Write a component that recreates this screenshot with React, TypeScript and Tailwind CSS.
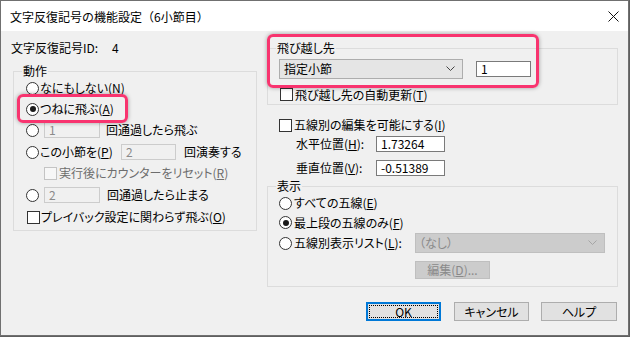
import React from "react";

const FONT = "font-['Noto_Sans_CJK_JP',sans-serif] [font-feature-settings:'palt']";

function Radio({ checked = false }: { checked?: boolean }) {
  return (
    <span className="w-[13px] h-[13px] shrink-0 rounded-full border border-[#333] bg-white flex items-center justify-center">
      {checked && <span className="w-[6px] h-[6px] rounded-full bg-[#1a1a1a]" />}
    </span>
  );
}

function Check({ disabled = false }: { disabled?: boolean }) {
  return (
    <span
      className={
        disabled
          ? "w-[13px] h-[13px] shrink-0 border border-[#c4c4c4] bg-[#f7f7f7]"
          : "w-[13px] h-[13px] shrink-0 border border-[#333] bg-white"
      }
    />
  );
}

function Box({ value, disabled = false, className = "" }: { value: string; disabled?: boolean; className?: string }) {
  return (
    <span
      className={
        (disabled
          ? "border-[#cccccc] bg-[#f0f0f0] text-[#8a8a8a] "
          : "border-[#7a7a7a] bg-white text-black ") +
        "h-[16px] border flex items-center pl-[4px] text-[12px] leading-none shrink-0 " +
        className
      }
    >
      {value}
    </span>
  );
}

function Chevron({ color }: { color: string }) {
  return (
    <svg width="9" height="6" viewBox="0 0 9 6" className="shrink-0">
      <polyline points="0.5,0.5 4.5,4.5 8.5,0.5" fill="none" stroke={color} strokeWidth="1" />
    </svg>
  );
}

function Legend({ children }: { children: React.ReactNode }) {
  return <legend className="ml-[8px] px-[1px] h-[16px] leading-[16px]">{children}</legend>;
}

export default function App() {
  return (
    <div className={`w-[630px] h-[337px] bg-[#5f5f5f] text-[12px] text-black ${FONT}`}>
      <div className="relative w-[629px] h-[336px] border border-[#707070] bg-[#f0f0f0] flex flex-col">
        {/* title bar */}
        <div className="h-[30px] bg-white flex items-center justify-between pl-[9px] pr-[9px] shrink-0">
          <span className="text-[12px] leading-none mt-[1px] [font-feature-settings:normal]">
            文字反復記号の機能設定（6小節目）
          </span>
          <svg width="11" height="11" viewBox="0 0 11 11">
            <path d="M0.5 0.5 L10.5 10.5 M10.5 0.5 L0.5 10.5" stroke="#111" strokeWidth="1" />
          </svg>
        </div>

        <div className="flex flex-1">
          {/* left column */}
          <div className="ml-[10px] flex flex-col">
            <div className="mt-[9px] h-[16px] leading-[16px] flex">
              <span>文字反復記号ID:</span>
              <span className="ml-[14px]">4</span>
            </div>
            <fieldset className="mt-[7px] ml-[2px] w-[244px] border border-[#dcdcdc] pb-[5px]">
              <Legend>動作</Legend>
              <div className="h-[18px] flex items-center pl-[12px]">
                <Radio />
                <span className="ml-[1px]">なにもしない(<u>N</u>)</span>
              </div>
              <div className="h-[24px] flex items-center pl-[12px]">
                <Radio checked />
                <span className="ml-[1px]">つねに飛ぶ(<u>A</u>)</span>
              </div>
              <div className="h-[18px] flex items-center pl-[12px]">
                <Radio />
                <Box value="1" disabled className="ml-[5px] w-[56px]" />
                <span className="ml-[6px]">回通過したら飛ぶ</span>
              </div>
              <div className="h-[26px] flex items-center pl-[12px]">
                <Radio />
                <span className="ml-[1px] w-[81px]">この小節を(<u>P</u>)</span>
                <Box value="2" disabled className="w-[55px]" />
                <span className="ml-[8px]">回演奏する</span>
              </div>
              <div className="h-[16px] flex items-center pl-[30px] text-[#6d6d6d]">
                <Check disabled />
                <span className="ml-[2px]">実行後にカウンターをリセット(<u>R</u>)</span>
              </div>
              <div className="h-[28px] flex items-center pl-[12px]">
                <Radio />
                <Box value="2" disabled className="ml-[5px] w-[56px]" />
                <span className="ml-[7px]">回通過したら止まる</span>
              </div>
              <div className="h-[16px] flex items-center pl-[13px]">
                <Check />
                <span className="ml-[1px]">プレイバック設定に関わらず飛ぶ(<u>O</u>)</span>
              </div>
            </fieldset>
          </div>

          {/* right column */}
          <div className="ml-[10px] w-[351px] flex flex-col">
            <fieldset className="mt-[9px] border border-[#dcdcdc]">
              <Legend>飛び越し先</Legend>
              <div className="mt-[3px] h-[20px] flex items-center">
                <span className="ml-[11px] w-[184px] h-[20px] border border-[#adadad] bg-[#e5e5e5] flex items-center justify-between pl-[4px] pr-[7px]">
                  <span>指定小節</span>
                  <Chevron color="#444" />
                </span>
                <Box value="1" className="ml-[13px] w-[55px]" />
              </div>
              <div className="mt-[6px] h-[19px] flex items-center pl-[12px]">
                <Check />
                <span className="ml-[2px]">飛び越し先の自動更新(<u>T</u>)</span>
              </div>
            </fieldset>

            <div className="mt-[11px] h-[18px] flex items-center pl-[12px]">
              <Check />
              <span className="ml-[2px]">五線別の編集を可能にする(<u>I</u>)</span>
            </div>
            <div className="mt-[2px] h-[16px] flex items-center pl-[29px]">
              <span className="w-[80px]">水平位置(<u>H</u>):</span>
              <Box value="1.73264" className="w-[69px]" />
            </div>
            <div className="mt-[8px] h-[16px] flex items-center pl-[29px]">
              <span className="w-[80px]">垂直位置(<u>V</u>):</span>
              <Box value="-0.51389" className="w-[69px]" />
            </div>

            <fieldset className="mt-[2px] border border-[#dcdcdc] pb-[7px]">
              <Legend>表示</Legend>
              <div className="h-[18px] flex items-center pl-[11px]">
                <Radio />
                <span className="ml-[2px]">すべての五線(<u>E</u>)</span>
              </div>
              <div className="h-[21px] flex items-center pl-[11px]">
                <Radio checked />
                <span className="ml-[2px]">最上段の五線のみ(<u>F</u>)</span>
              </div>
              <div className="h-[20px] flex items-center pl-[11px]">
                <Radio />
                <span className="ml-[2px] w-[121px]">五線別表示リスト(<u>L</u>):</span>
                <span className="w-[190px] h-[20px] border border-[#bfbfbf] bg-[#cccccc] flex items-center justify-between pl-[3px] pr-[7px] text-[#8a8a8a]">
                  <span>（なし）</span>
                  <Chevron color="#a5a5a5" />
                </span>
              </div>
              <div className="mt-[8px] h-[18px] flex pl-[147px]">
                <span className="w-[75px] h-[18px] border border-[#bfbfbf] bg-[#cccccc] text-[#8a8a8a] flex items-center justify-center">
                  編集(<u>D</u>)...
                </span>
              </div>
            </fieldset>

            <div className="mt-[15px] flex justify-end pr-[1px]">
              <span className="w-[75px] h-[19px] border-2 border-[#0078d7] bg-[#e1e1e1] p-[1px] flex">
                <span className="flex-1 border border-dotted border-black flex items-center justify-center leading-none">OK</span>
              </span>
              <span className="ml-[13px] w-[75px] h-[19px] border border-[#adadad] bg-[#e1e1e1] flex items-center justify-center">
                キャンセル
              </span>
              <span className="ml-[12px] w-[76px] h-[19px] border border-[#adadad] bg-[#e1e1e1] flex items-center justify-center">
                ヘルプ
              </span>
            </div>
          </div>
        </div>

        {/* pink annotation frames */}
        <div className="absolute left-[16px] top-[93px] w-[111px] h-[29px] border-[3px] border-[#f8346f] rounded-[6px] shadow-[0_0_4px_rgba(0,0,0,0.35)]" />
        <div className="absolute left-[266px] top-[33px] w-[272px] h-[54px] border-[3px] border-[#f8346f] rounded-[6px] shadow-[0_0_4px_rgba(0,0,0,0.35)]" />
      </div>
    </div>
  );
}
